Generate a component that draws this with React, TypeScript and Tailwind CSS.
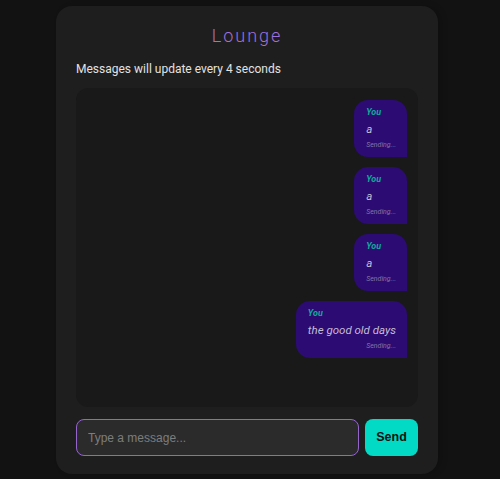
import React from "react"

const messages = [
  { id: 1, author: "You", text: "a", status: "Sending..." },
  { id: 2, author: "You", text: "a", status: "Sending..." },
  { id: 3, author: "You", text: "a", status: "Sending..." },
  { id: 4, author: "You", text: "the good old days", status: "Sending..." },
]

export default function App() {
  return (
    <div className="min-h-screen bg-[#121212] flex justify-center pt-[6px] font-['Roboto',sans-serif]">
      <div className="w-[382px] h-[468px] ml-[-6px] bg-[#1e1e1e] rounded-2xl px-5 pt-[18px] pb-[18px] flex flex-col shadow-[4px_0_6px_rgba(0,0,0,0.15)]">
        <h1 className="text-center text-[18px] leading-[24px] tracking-[2px] font-light text-[#a070da]">Lounge</h1>
        <p className="mt-[13px] text-[12px] leading-[16px] text-[#e2e2e2]">Messages will update every 4 seconds</p>

        {/* Chat window */}
        <div className="mt-[11px] h-[319px] bg-[#191919] rounded-xl pt-3 pr-[11px] pl-3 flex flex-col items-end gap-[10px] overflow-hidden">
          {messages.map((m) => (
            <div key={m.id} className="bg-[#2c0b72] rounded-[14px] rounded-br-none pl-[12px] pr-[11px] pt-[6px] pb-[7px] flex flex-col italic">
              <span className="text-[9px] leading-[12px] font-bold text-[#0fa99c]">{m.author}</span>
              <span className="mt-[3px] text-[11.5px] leading-[16px] text-[#c4bcd6]">{m.text}</span>
              <span className="mt-[3px] self-end text-[7px] leading-[10px] text-[#8575a6]">{m.status}</span>
            </div>
          ))}
        </div>

        {/* Input row */}
        <div className="mt-[12px] flex gap-[6px]">
          <input
            type="text"
            placeholder="Type a message..."
            className="flex-1 h-[37px] bg-[#2b2b2b] border border-[#9565cc] rounded-lg px-[11px] text-[12px] text-[#ddd] placeholder-[#7d7d7d] outline-none font-['Liberation_Sans',Arial,sans-serif]"
          />
          <button className="w-[53px] h-[37px] bg-[#03dac6] rounded-lg text-[12.5px] font-bold text-[#111] font-['Liberation_Sans',Arial,sans-serif]">
            Send
          </button>
        </div>
      </div>
    </div>
  )
}
